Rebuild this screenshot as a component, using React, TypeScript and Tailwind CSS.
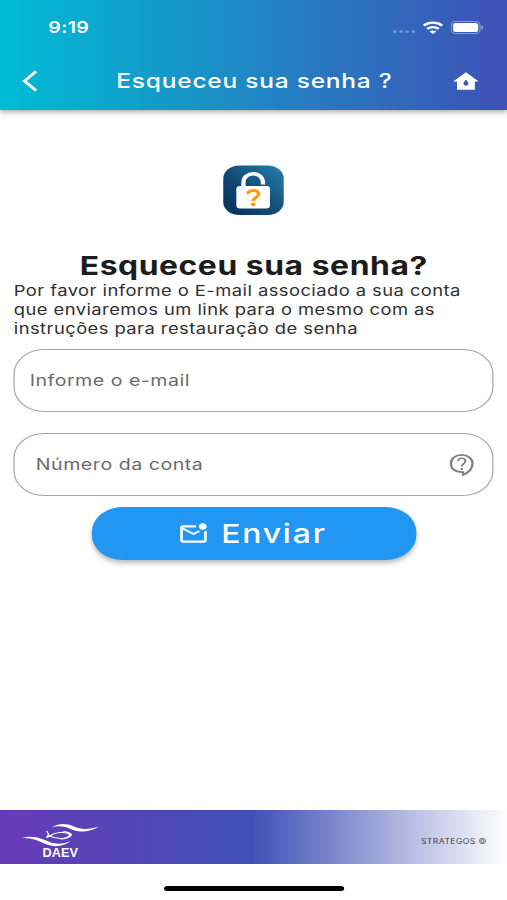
import React from "react";
import { MdWaterDamage, MdOutlineMarkEmailUnread } from "react-icons/md";

function StatusBar() {
  return (
    <div className="flex h-[50px] justify-between pl-[39.5px] pr-[19.5px]">
      <span className="mt-[16px] text-[16px] leading-[22px] font-semibold tracking-[0.2px]">9:19</span>
      <div className="mt-[19px] flex h-4 items-center">
        <div className="mt-2 mr-[6px] flex gap-[2px] opacity-30">
          <i className="size-[3px] rounded-full bg-white" />
          <i className="size-[3px] rounded-full bg-white" />
          <i className="size-[3px] rounded-full bg-white" />
          <i className="size-[3px] rounded-full bg-white" />
        </div>
        <svg width="17" height="13" viewBox="0 0 17 13" fill="none" stroke="white" strokeWidth="2.3">
          <path d="M1 4.7C5.2.7 11.800.7 16 4.700" />
          <path d="M3.800 7.900C6.500 5.400 10.500 5.400 13.200 7.900" />
          <path d="M8.500 13 5.800 10.500C7.300 9.100 9.700 9.100 11.200 10.500Z" fill="white" stroke="none" />
        </svg>
        <svg className="ml-[6px]" width="27" height="13" viewBox="0 0 27 13">
          <rect x=".5" y=".5" width="23.500" height="12" rx="3.700" fill="none" stroke="white" strokeOpacity=".4" />
          <rect x="2" y="2" width="20.500" height="9" rx="2.300" fill="white" />
          <path d="M25.200 4.500v4c.8-.3 1.300-1.100 1.300-2s-.5-1.700-1.300-2z" fill="white" fillOpacity=".5" />
        </svg>
      </div>
    </div>
  );
}

function LockLogo() {
  return (
    <svg width="50" height="51" viewBox="0 0 50 51">
      <defs>
        <linearGradient id="lock" x1="0" y1="1" x2="1" y2="0">
          <stop offset="0" stopColor="#062f57" />
          <stop offset=".45" stopColor="#114a75" />
          <stop offset="1" stopColor="#2780ad" />
        </linearGradient>
      </defs>
      <rect x=".3" y=".5" width="49.400" height="49.500" rx="13" fill="url(#lock)" />
      <path d="M16.800 23V17.500C16.800 5.800 32.700 5.800 32.700 17.500V19.500" fill="none" stroke="white" strokeWidth="3.500" />
      <rect x="11" y="21" width="27.500" height="22.500" rx="3" fill="white" />
      <path d="M20.300 29C21.200 24.400 29.200 24.500 29.200 29C29.200 32.400 24.800 32.300 24.800 36" fill="none" stroke="#ff9b16" strokeWidth="3" />
      <circle cx="24.800" cy="39.300" r="1.900" fill="#ff9b16" />
    </svg>
  );
}

function HelpIcon() {
  return (
    <svg width="24" height="24" viewBox="0 0 24 24" fill="none" stroke="#808080" strokeWidth="1.900">
      <path d="M12.200 19.100C6.500 19.200 3.200 15.400 3.200 10.500C3.200 5.500 7 1.900 12 1.900S20.900 5.500 20.900 10.500C20.900 15.500 17.500 20 13.100 22V19.100Z" />
      <path d="M9.100 8.200C9.300 4.300 15 4.400 15 8.100C15 10.500 12.100 10.700 12.100 13.600" strokeWidth="1.600" />
      <path d="M12.100 15V17" />
    </svg>
  );
}

function DaevLogo() {
  return (
    <svg width="64" height="38" viewBox="0 0 64 38" fill="white">
      <path d="M0 15C10 11.500 17 16.500 23 19.200C29 21.700 35 20.700 39.500 18C35 22.800 28 24.700 21 21.800C14 18.700 10 14.500 0 15Z" />
      <path d="M24 4.500C30 .1 36 0 42 3.300C49 7.300 55 6.500 63 3.200C55 9.500 48 9.800 40.500 6.500C35 3.300 30 2.400 24 4.500Z" />
      <path d="M20 8 21.700 11.200 20 14.800C27 8.800 35 8 39.800 11.700C36 16.200 29 16.700 22 12.700" fill="none" stroke="white" strokeWidth="1" />
      <path d="M32 8C37 7.900 40.500 9.800 41 12C39 14.800 36 16.500 31 16.500C36 15 38 13.500 38.500 12C37.500 10 35 9 32 8Z" />
      <text x="16.800" y="34" fontFamily="Liberation Sans, sans-serif" fontWeight="700" fontSize="12" textLength="28.800" lengthAdjust="spacingAndGlyphs">DAEV</text>
    </svg>
  );
}

export default function App() {
  return (
    <div className="h-[900px] w-[507px] overflow-hidden bg-white">
      <div className="flex h-[900px] w-[414px] origin-top-left scale-x-[1.2246] flex-col bg-white font-['Inter',sans-serif]">
        <header className="h-[110px] shrink-0 bg-linear-to-r/srgb from-[#00bcd4] to-[#3f51b5] text-white shadow-[0_2px_5px_rgba(0,0,0,0.35)]">
          <StatusBar />
          <div className="flex h-[62px] items-center justify-between pr-[21px] pl-[17.5px]">
            <svg width="13" height="22" viewBox="0 0 13 22" fill="none" stroke="white" strokeWidth="2.600">
              <path d="M11.500 1.300 1.900 11 11.500 20.700" />
            </svg>
            <h1 className="ml-[17px] text-[20px] leading-6 font-medium tracking-[0.63px] whitespace-nowrap">Esqueceu sua senha ?</h1>
            <MdWaterDamage className="size-[25px]" />
          </div>
        </header>
        <main className="flex grow flex-col px-[11.25px]">
          <div className="mt-[55px] flex justify-center pl-[0.5px]">
            <LockLogo />
          </div>
          <h2 className="mt-[34.5px] pl-[0.5px] text-center text-[26px] leading-[30px] font-bold tracking-[0.45px] whitespace-nowrap text-[#1c1c1c]">Esqueceu sua senha?</h2>
          <p className="mt-[0.5px] text-[15px] leading-[19px] tracking-[0.36px] whitespace-nowrap text-[#303030]">
            Por favor informe o E-mail associado a sua conta<br />
            que enviaremos um link para o mesmo com as<br />
            instruções para restauração de senha
          </p>
          <div className="mt-[11px] flex h-[63px] shrink-0 items-center rounded-[25px] border border-[#a6a6a6] pb-px pl-[12px] text-[16px] tracking-[0.4px] text-[#6b6b6b]">Informe o e-mail</div>
          <div className="mt-[21px] flex h-[63px] shrink-0 items-center justify-between rounded-[25px] border border-[#a6a6a6] pr-[12.5px] pl-[17px] text-[16px] tracking-[0.42px] text-[#6b6b6b]">
            <span className="mb-px">Número da conta</span>
            <HelpIcon />
          </div>
          <button className="mt-[11px] flex h-[53px] w-[265px] shrink-0 items-center justify-center gap-[9.500px] self-center rounded-[25px] bg-[#2196f3] pr-[2px] text-white shadow-[0_3px_5px_rgba(0,0,0,0.28)]">
            <MdOutlineMarkEmailUnread className="size-[26px]" />
            <span className="mt-px text-[26px] leading-8 font-medium tracking-[1.5px]">Enviar</span>
          </button>
        </main>
        <footer className="flex h-[54px] shrink-0 items-center justify-between bg-linear-to-r/srgb from-[#673ab7] via-[#3f51b5] to-white pr-[16.500px] pl-[18px]">
          <div className="mt-[9px]"><DaevLogo /></div>
          <span className="mt-[9px] text-[7px] leading-[10px] tracking-[0.35px] text-[#3d3d50]">STRATEGOS ©</span>
        </footer>
        <div className="flex h-[36px] shrink-0 justify-center pt-[22px]">
          <div className="h-[5px] w-[147px] rounded-full bg-black" />
        </div>
      </div>
    </div>
  );
}
